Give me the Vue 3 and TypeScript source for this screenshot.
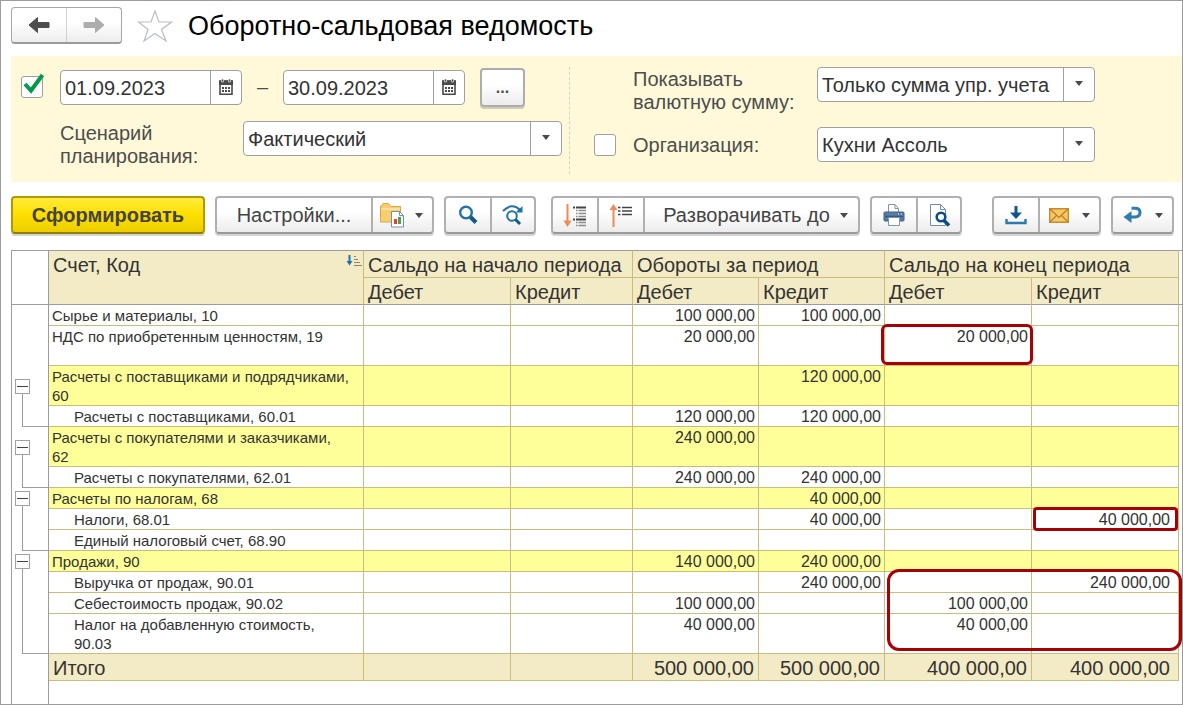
<script setup lang="ts">
import { ref } from 'vue'

interface Row {
  name: string
  code: string
  level: 0 | 1
  parent?: boolean
  tall?: boolean
  wrap?: boolean
  tree?: 'open' | 'mid' | 'end'
  values: string[]
  mark?: { col: number; kind: 'cell' | 'inner' | 'block' }
}

const rows: Row[] = [
  { name: 'Сырье и материалы', code: '10', level: 0, values: ['', '', '100 000,00', '100 000,00', '', ''] },
  { name: 'НДС по приобретенным ценностям', code: '19', level: 0, tall: true, values: ['', '', '20 000,00', '', '20 000,00', ''], mark: { col: 4, kind: 'cell' } },
  { name: 'Расчеты с поставщиками и подрядчиками', code: '60', level: 0, parent: true, wrap: true, tree: 'open', values: ['', '', '', '120 000,00', '', ''] },
  { name: 'Расчеты с поставщиками', code: '60.01', level: 1, tree: 'end', values: ['', '', '120 000,00', '120 000,00', '', ''] },
  { name: 'Расчеты с покупателями и заказчиками', code: '62', level: 0, parent: true, wrap: true, tree: 'open', values: ['', '', '240 000,00', '', '', ''] },
  { name: 'Расчеты с покупателями', code: '62.01', level: 1, tree: 'end', values: ['', '', '240 000,00', '240 000,00', '', ''] },
  { name: 'Расчеты по налогам', code: '68', level: 0, parent: true, tree: 'open', values: ['', '', '', '40 000,00', '', ''] },
  { name: 'Налоги', code: '68.01', level: 1, tree: 'mid', values: ['', '', '', '40 000,00', '', '40 000,00'], mark: { col: 5, kind: 'inner' } },
  { name: 'Единый налоговый счет', code: '68.90', level: 1, tree: 'end', values: ['', '', '', '', '', ''] },
  { name: 'Продажи', code: '90', level: 0, parent: true, tree: 'open', values: ['', '', '140 000,00', '240 000,00', '', ''] },
  { name: 'Выручка от продаж', code: '90.01', level: 1, tree: 'mid', values: ['', '', '', '240 000,00', '', '240 000,00'], mark: { col: 4, kind: 'block' } },
  { name: 'Себестоимость продаж', code: '90.02', level: 1, tree: 'mid', values: ['', '', '100 000,00', '', '100 000,00', ''] },
  { name: 'Налог на добавленную стоимость', code: '90.03', level: 1, wrap: true, tree: 'end', values: ['', '', '40 000,00', '', '40 000,00', ''] },
]

const totals = ['', '', '500 000,00', '500 000,00', '400 000,00', '400 000,00']
const sections = ['Сальдо на начало периода', 'Обороты за период', 'Сальдо на конец периода']

const usePeriod = ref(true)
const useOrg = ref(false)
const dateFrom = ref('01.09.2023')
const dateTo = ref('30.09.2023')
</script>

<template>
  <main class="window">
    <header class="head">
      <div class="nav">
        <button type="button" aria-label="Назад">
          <svg width="22" height="18" viewBox="0 0 22 18"><path d="M1 9 9.500 1.500V6.500H21V11.500H9.500V16.500Z" fill="#4d4d4d" stroke="#4d4d4d" stroke-linejoin="round" /></svg>
        </button>
        <button type="button" aria-label="Вперед">
          <svg width="22" height="18" viewBox="0 0 22 18"><path d="M21 9 12.500 1.500V6.500H1V11.500H12.500V16.500Z" fill="#adadad" stroke="#adadad" stroke-linejoin="round" /></svg>
        </button>
      </div>
      <button type="button" class="star" aria-label="В избранное">
        <svg width="36" height="34" viewBox="0 0 36 34"><path d="M18 2 22 13H34.500L24.500 20.500 29 32 18 24.500 7 32 11 20.500 1.500 13H14Z" fill="#fff" stroke="#b9bec4" stroke-width="1.200" /></svg>
      </button>
      <h1>Оборотно-сальдовая ведомость</h1>
    </header>

    <section class="filters">
      <div class="period">
        <span class="tick">
          <input v-model="usePeriod" type="checkbox" aria-label="Период" />
          <svg v-if="usePeriod" width="24" height="22" viewBox="0 0 24 22"><path d="M3 11 9 17.500 20.500 2" fill="none" stroke="#009a49" stroke-width="4" /></svg>
        </span>
        <div class="period-rows">
          <div class="dates">
            <div class="field date">
              <input v-model="dateFrom" type="text" aria-label="Начало периода" />
              <button type="button" aria-label="Выбрать начало периода">
                <svg width="14" height="16" viewBox="0 0 14 16"><path d="M1 2H13V15.200H1Z" fill="#fff" stroke="#4a4a4a" stroke-width="1.600" /><path d="M0 1.500H14V6H0Z" fill="#4a4a4a" /><path d="M2.500 0H4.500V3H2.500ZM9.500 0H11.500V3H9.500Z" fill="#4a4a4a" stroke="#fff" stroke-width=".6" /><path d="M3 8h2v2H3zM6 8h2v2H6zM9 8h2v2H9zM3 11h2v2H3zM6 11h2v2H6zM9 11h2v2H9z" fill="#4a4a4a" /></svg>
              </button>
            </div>
            <span class="dash">–</span>
            <div class="field date">
              <input v-model="dateTo" type="text" aria-label="Конец периода" />
              <button type="button" aria-label="Выбрать конец периода">
                <svg width="14" height="16" viewBox="0 0 14 16"><path d="M1 2H13V15.200H1Z" fill="#fff" stroke="#4a4a4a" stroke-width="1.600" /><path d="M0 1.500H14V6H0Z" fill="#4a4a4a" /><path d="M2.500 0H4.500V3H2.500ZM9.500 0H11.500V3H9.500Z" fill="#4a4a4a" stroke="#fff" stroke-width=".6" /><path d="M3 8h2v2H3zM6 8h2v2H6zM9 8h2v2H9zM3 11h2v2H3zM6 11h2v2H6zM9 11h2v2H9z" fill="#4a4a4a" /></svg>
              </button>
            </div>
            <button type="button" class="more">...</button>
          </div>
          <div class="scenario">
            <label for="scenario">Сценарий<br />планирования:</label>
            <div class="field">
              <select id="scenario"><option>Фактический</option></select>
              <span class="caret"><i></i></span>
            </div>
          </div>
        </div>
      </div>

      <div class="options">
        <label for="currency" class="opt-label">Показывать<br />валютную сумму:</label>
        <div class="field">
          <select id="currency"><option>Только сумма упр. учета</option></select>
          <span class="caret"><i></i></span>
        </div>
        <span class="tick">
          <input v-model="useOrg" type="checkbox" aria-label="Отбор по организации" />
          <svg v-if="useOrg" width="24" height="22" viewBox="0 0 24 22"><path d="M3 11 9 17.500 20.500 2" fill="none" stroke="#009a49" stroke-width="4" /></svg>
        </span>
        <label for="org" class="org-label">Организация:</label>
        <div class="field">
          <select id="org"><option>Кухни Ассоль</option></select>
          <span class="caret"><i></i></span>
        </div>
      </div>
    </section>

    <div class="toolbar">
      <button type="button" class="run">Сформировать</button>

      <div class="group">
        <button type="button" class="settings">Настройки...</button>
        <button type="button" class="folder" aria-label="Варианты отчета">
          <svg width="26" height="26" viewBox="0 0 26 26">
            <path d="M1.500 20V5Q1.500 3.500 3 3.500L4 1.500H9.500L11.500 4.500H21.500V20Z" fill="#f7cf6e" stroke="#dca642" />
            <path d="M2 7H21" stroke="#fbe19b" stroke-width="2" />
            <path d="M12.500 9.500H20.500L24.500 13.500V25H12.500Z" fill="#fff" stroke="#7890a5" />
            <path d="M20.500 9.500V13.500H24.500" fill="none" stroke="#7890a5" />
            <path d="M15 17H18V22H15Z" fill="#e0432f" /><path d="M19 15H22V22H19Z" fill="#4ba04b" />
          </svg>
          <i></i>
        </button>
      </div>

      <div class="group icons">
        <button type="button" aria-label="Найти">
          <svg width="22" height="22" viewBox="0 0 22 22"><circle cx="9" cy="8.500" r="5.800" fill="#fff" stroke="#2272a8" stroke-width="2.400" /><path d="M13.500 13 19 18.500" stroke="#15598c" stroke-width="4" /></svg>
        </button>
        <button type="button" aria-label="Найти далее">
          <svg width="24" height="24" viewBox="0 0 24 24"><path d="M2 8Q11-1 19 7" fill="none" stroke="#2272a8" stroke-width="2.200" /><path d="M21.500 3V9.500H14.500Z" fill="#2272a8" /><circle cx="11" cy="13" r="4.800" fill="#fff" stroke="#2272a8" stroke-width="2" /><path d="M14.500 16.500 19 21" stroke="#15598c" stroke-width="3" /></svg>
        </button>
      </div>

      <div class="group icons gap-s">
        <button type="button" aria-label="Развернуть группы">
          <svg width="24" height="25" viewBox="0 0 24 25"><path d="M4.500 1V20" stroke="#f28a55" stroke-width="2" /><path d="M.5 17.500H8.500L4.500 24Z" fill="#f28a55" /><path d="M10 4.500H12M13 4.500H23M10 16.500H12M13 16.500H23" stroke="#444" stroke-width="1.800" /><path d="M13 7.500H14.500M15.500 7.500H23M13 10.500H14.500M15.500 10.500H23M13 13.500H14.500M15.500 13.500H23M13 19.500H14.500M15.500 19.500H23M13 22.500H14.500M15.500 22.500H23" stroke="#8a8a8a" stroke-width="1.400" /></svg>
        </button>
        <button type="button" aria-label="Свернуть группы">
          <svg width="24" height="25" viewBox="0 0 24 25"><path d="M4.500 4V24" stroke="#f28a55" stroke-width="2" /><path d="M.5 7H8.500L4.500 1Z" fill="#f28a55" /><path d="M9 4.500H11.500M13 4.500H23M9 8H11.500M13 8H23M9 11.500H11.500M13 11.500H23" stroke="#444" stroke-width="1.600" /></svg>
        </button>
        <button type="button" class="expand">Разворачивать до <i></i></button>
      </div>

      <div class="group icons">
        <button type="button" aria-label="Печать">
          <svg width="22" height="22" viewBox="0 0 22 22"><path d="M5.500 9V.5H12L15.500 4.500V9" fill="#fff" stroke="#8294a8" /><path d="M12 .5V4.500H15.500" fill="none" stroke="#8294a8" /><rect x="1" y="8" width="20" height="9" rx="1" fill="#587da5" stroke="#3d6188" /><path d="M2 12.500H20" stroke="#34587f" stroke-width="1.500" /><path d="M15 10H16M18 10H19" stroke="#fff" /><path d="M5.500 13.500H16.500V21.500H5.500Z" fill="#fff" stroke="#8294a8" /></svg>
        </button>
        <button type="button" aria-label="Предварительный просмотр">
          <svg width="23" height="24" viewBox="0 0 23 24"><path d="M2.500 22.500V1.500H12.500L17.500 6.500V22.500Z" fill="#fff" stroke="#778ca0" /><path d="M12.500 1.500V6.500H17.500" fill="none" stroke="#778ca0" /><circle cx="13" cy="14" r="4.300" fill="#fff" stroke="#0d4f82" stroke-width="2.600" /><path d="M16 17.500 21 22.500" stroke="#0d4f82" stroke-width="3.600" /></svg>
        </button>
      </div>

      <div class="group icons gap-l">
        <button type="button" aria-label="Сохранить">
          <svg width="22" height="20" viewBox="0 0 22 20"><path d="M11 1V9" stroke="#0f568a" stroke-width="3" /><path d="M5 7.500H17L11 14Z" fill="#0f568a" /><path d="M1.500 14V18H20.500V14" fill="none" stroke="#2d79a8" stroke-width="2.400" /></svg>
        </button>
        <button type="button" class="drop" aria-label="Отправить">
          <svg width="20" height="15" viewBox="0 0 20 15"><path d="M.7.7H19.300V14.300H.7Z" fill="#f7c866" stroke="#c9892b" stroke-width="1.400" /><path d="M1 1 10 9.500 19 1M1 14 7.500 7.500M19 14 12.500 7.500" fill="none" stroke="#bd7c20" stroke-width="1.200" /></svg>
          <i></i>
        </button>
      </div>

      <div class="group icons">
        <button type="button" class="drop" aria-label="Вернуться">
          <svg width="20" height="18" viewBox="0 0 20 18"><path d="M8.500 2.300H12Q17 2.300 17 6.500T12 11H6" fill="none" stroke="#2f7cb0" stroke-width="3" /><path d="M.5 11 8.500 5V17Z" fill="#2f7cb0" /></svg>
          <i></i>
        </button>
      </div>
    </div>

    <table>
      <colgroup>
        <col class="c-tree" /><col /><col class="c-wide" /><col class="c-open" /><col class="c-turn" /><col class="c-turn" /><col class="c-wide" /><col class="c-wide" /><col class="c-edge" />
      </colgroup>
      <thead>
        <tr>
          <td class="tree" rowspan="2"></td>
          <th class="account" rowspan="2" scope="col">
            <div class="account-head">
              <span>Счет, Код</span>
              <svg width="16" height="12" viewBox="0 0 16 12"><path d="M3.500 0V8" stroke="#1a73b8" stroke-width="2" /><path d="M.5 6H6.500L3.500 10.500Z" fill="#1a73b8" /><path d="M8 1.500H10M8 4.500H12M8 7.500H14M8 10.500H16" stroke="#8c8667" stroke-width="1.200" /></svg>
            </div>
          </th>
          <th v-for="s in sections" :key="s" class="section" colspan="2" scope="colgroup">{{ s }}</th>
          <td class="edge" rowspan="2"></td>
        </tr>
        <tr>
          <template v-for="s in sections" :key="s">
            <th scope="col">Дебет</th>
            <th scope="col">Кредит</th>
          </template>
        </tr>
      </thead>
      <tbody>
        <tr v-for="r in rows" :key="r.code" :class="{ parent: r.parent, tall: r.tall }">
          <td class="tree" :class="r.tree">
            <button v-if="r.parent" type="button" :aria-label="'Свернуть ' + r.name"></button>
          </td>
          <th scope="row" :class="{ child: r.level === 1 }">{{ r.name }}, <br v-if="r.wrap" />{{ r.code }}</th>
          <td v-for="(v, i) in r.values" :key="i" class="num">
            {{ v }}<span v-if="r.mark && r.mark.col === i" class="mark" :class="r.mark.kind"></span>
          </td>
          <td></td>
        </tr>
      </tbody>
      <tfoot>
        <tr>
          <td class="tree"></td>
          <th scope="row">Итого</th>
          <td v-for="(v, i) in totals" :key="i" class="num">{{ v }}</td>
          <td></td>
        </tr>
      </tfoot>
    </table>
    <div class="tail"></div>
  </main>
</template>

<style>
body {
  margin: 0;
}
</style>

<style scoped>
* {
  box-sizing: border-box;
}
.window {
  display: flex;
  flex-direction: column;
  min-height: 100vh;
  padding: 6px 0 0 10px;
  border: 1px solid #9c9c9c;
  background: #fff;
  color: #333;
  font: 20px/23px "Liberation Sans", Arial, sans-serif;
}
button,
input,
select {
  margin: 0;
  padding: 0;
  border: 0;
  background: none;
  color: inherit;
  font: inherit;
}
button {
  display: flex;
  align-items: center;
  justify-content: center;
}
svg {
  display: block;
  flex: none;
}

.head {
  display: flex;
  align-items: center;
  height: 37px;
}
.nav {
  display: flex;
  width: 111px;
  height: 37px;
  border: 1px solid #a6a6a6;
  border-bottom: 2px solid #9a9a9a;
  border-radius: 4px;
  background: linear-gradient(#fff 40%, #ededed);
}
.nav button {
  flex: 1;
}
.nav button + button {
  border-left: 1px solid #d2d2d2;
}
.star {
  margin: 0 15px;
}
h1 {
  margin: 0;
  color: #000;
  font-size: 27px;
  font-weight: 400;
  line-height: 36px;
}

.filters {
  display: flex;
  margin-top: 12px;
  padding: 11px 0 8px 10px;
  background: #fff9d9;
  color: #4d4d4d;
}
.period {
  display: flex;
  gap: 17px;
  height: 107px;
  padding-right: 7px;
  border-right: 1px dashed #d8d3bd;
}
.period > .tick {
  margin-top: 9px;
}
.tick {
  position: relative;
  width: 22px;
  height: 22px;
}
.tick input {
  display: block;
  width: 22px;
  height: 22px;
  appearance: none;
  border: 1px solid #a0a0a0;
  border-radius: 3px;
  background: #fff;
}
.tick svg {
  position: absolute;
  left: 1px;
  top: -3px;
  pointer-events: none;
}
.period-rows {
  display: flex;
  flex-direction: column;
  gap: 13px;
  width: 502px;
}
.dates {
  display: flex;
  align-items: center;
  height: 41px;
}
.field {
  display: flex;
  height: 35px;
  border: 1px solid #a0a0a0;
  border-radius: 4px;
  background: #fff;
  color: #333;
}
.field input,
.field select {
  flex: 1;
  min-width: 0;
  padding-top: 1px;
  padding-left: 4px;
  appearance: none;
  outline: 0;
}
.date {
  width: 182px;
}
.date button,
.caret {
  display: flex;
  align-items: center;
  justify-content: center;
  width: 31px;
  padding-bottom: 2px;
  border-left: 1px solid #a0a0a0;
}
i {
  border: 4px solid transparent;
  border-top: 5px solid #4a4a4a;
  border-bottom: 0;
}
.dash {
  width: 41px;
  text-align: center;
}
.more {
  width: 45px;
  height: 39px;
  margin-left: 15px;
  border: 2px solid #adadad;
  border-radius: 4px;
  background: linear-gradient(#fff 40%, #ececec);
  box-shadow: 0 2px 0 #d0ccb8;
  font-size: 16px;
  font-weight: 700;
}
.scenario {
  display: flex;
}
.scenario label {
  width: 183px;
}
label {
  padding-top: 1px;
}
.scenario .field {
  flex: 1;
}
.options {
  display: grid;
  grid-template-columns: 22px 167px 278px;
  grid-template-rows: 46px 35px;
  column-gap: 17px;
  row-gap: 14px;
  padding-left: 24px;
}
.opt-label {
  grid-column: 2;
}
.options .tick,
.org-label {
  align-self: center;
}

.toolbar {
  display: flex;
  gap: 10px;
  margin: 14px 8px 16px 0;
  color: #444;
}
.run,
.group {
  flex: none;
  height: 38px;
  border: 2px solid #b0b0b0;
  border-bottom-color: #9a9a9a;
  border-radius: 4px;
  background: linear-gradient(#fff 40%, #ececec);
  box-shadow: 0 2px 0 #d4d4d4;
}
.run {
  width: 194px;
  border-color: #b09a00;
  border-bottom-color: #8f7d00;
  background: linear-gradient(#ffec3d, #ffe000 45%, #ecce00);
  font-weight: 700;
}
.group {
  display: flex;
}
.group button + button {
  border-left: 2px solid #b0b0b0;
}
.settings {
  width: 154px;
}
.folder {
  gap: 10px;
  width: 61px;
  padding-right: 4px;
}
.icons button {
  width: 44px;
}
.gap-s button + button {
  width: 46px;
}
.gap-s .expand.expand {
  gap: 10px;
  width: 215px;
  padding-left: 8px;
}
.icons .drop {
  gap: 12px;
  width: 59px;
}
.icons button + .drop {
  gap: 13px;
  width: 61px;
}
.gap-s {
  margin-left: 5px;
}
.gap-l {
  margin-left: 20px;
}

table {
  width: 100%;
  table-layout: fixed;
  border-collapse: separate;
  border-spacing: 0;
  font-size: 16px;
  line-height: 19px;
}
.c-tree {
  width: 38px;
}
.c-wide {
  width: 147px;
}
.c-open {
  width: 122px;
}
.c-turn {
  width: 126px;
}
.c-edge {
  width: 3px;
}
th,
td {
  padding: 0;
  font-weight: 400;
  text-align: left;
  vertical-align: top;
}
thead th,
thead td {
  height: 27px;
  border-bottom: 1px solid #9c9c9c;
}
thead tr:first-child > * {
  height: 28px;
  border-top: 1px solid #9c9c9c;
}
thead th {
  padding: 2px 4px 0;
  border-right: 1px solid #c9bc7d;
  background: #f3ebc5;
  font-size: 20px;
  line-height: 24px;
  white-space: nowrap;
}
thead .section {
  border-bottom-color: #c9bc7d;
}
.account-head {
  display: flex;
  justify-content: space-between;
  margin-right: -3px;
}
.account-head svg {
  margin-top: 2px;
}
.tree {
  border-left: 1px solid #9c9c9c;
  border-right: 1px solid #9c9c9c;
  background-repeat: no-repeat;
  vertical-align: middle;
}
.open {
  background-image: linear-gradient(#9c9c9c, #9c9c9c);
  background-position: 10px 100%;
  background-size: 1px 50%;
}
.mid {
  background-image: linear-gradient(#9c9c9c, #9c9c9c);
  background-position: 10px 0;
  background-size: 1px 100%;
}
.end {
  background-image: linear-gradient(#9c9c9c, #9c9c9c), linear-gradient(#9c9c9c, #9c9c9c);
  background-position: 10px 0, 10px 100%;
  background-size: 1px 100%, 26px 1px;
}
.tree button {
  width: 15px;
  height: 15px;
  margin-left: 3px;
  border: 1px solid #a0a0a0;
  background: #fff linear-gradient(#444, #444) center / 11px 1px no-repeat;
}
tbody th,
tbody .num {
  padding: 1px 3px 0;
  border-right: 1px solid #c9bc7d;
  border-bottom: 1px solid #c9bc7d;
}
tbody th {
  font-size: 15px;
  white-space: nowrap;
}
tbody tr {
  height: 21px;
}
tbody .tall {
  height: 40px;
}
tbody .child {
  padding-left: 25px;
}
.parent th,
.parent .num {
  background: #ffff99;
}
.num {
  position: relative;
  text-align: right;
  white-space: nowrap;
}
tfoot th,
tfoot .num {
  height: 27px;
  padding: 2px 4px 0;
  border-right: 1px solid #c9bc7d;
  border-bottom: 1px solid #c9bc7d;
  background: #f3ebc5;
  font-size: 20px;
  line-height: 24px;
}
tbody .num:nth-child(8),
tfoot .num:nth-child(8) {
  padding-right: 8px;
}
.mark {
  position: absolute;
  z-index: 1;
  border: 3px solid #a90008;
  pointer-events: none;
}
.cell {
  inset: -2px -2px 0 -4px;
  border-radius: 6px;
}
.inner {
  inset: -2px 0 -2px 1px;
  border-radius: 4px;
}
.block {
  inset: -3px -151px -59px 2px;
  border-radius: 12px;
}
.tail {
  flex: 1;
  width: 38px;
  border: solid #9c9c9c;
  border-width: 0 1px;
}
</style>
